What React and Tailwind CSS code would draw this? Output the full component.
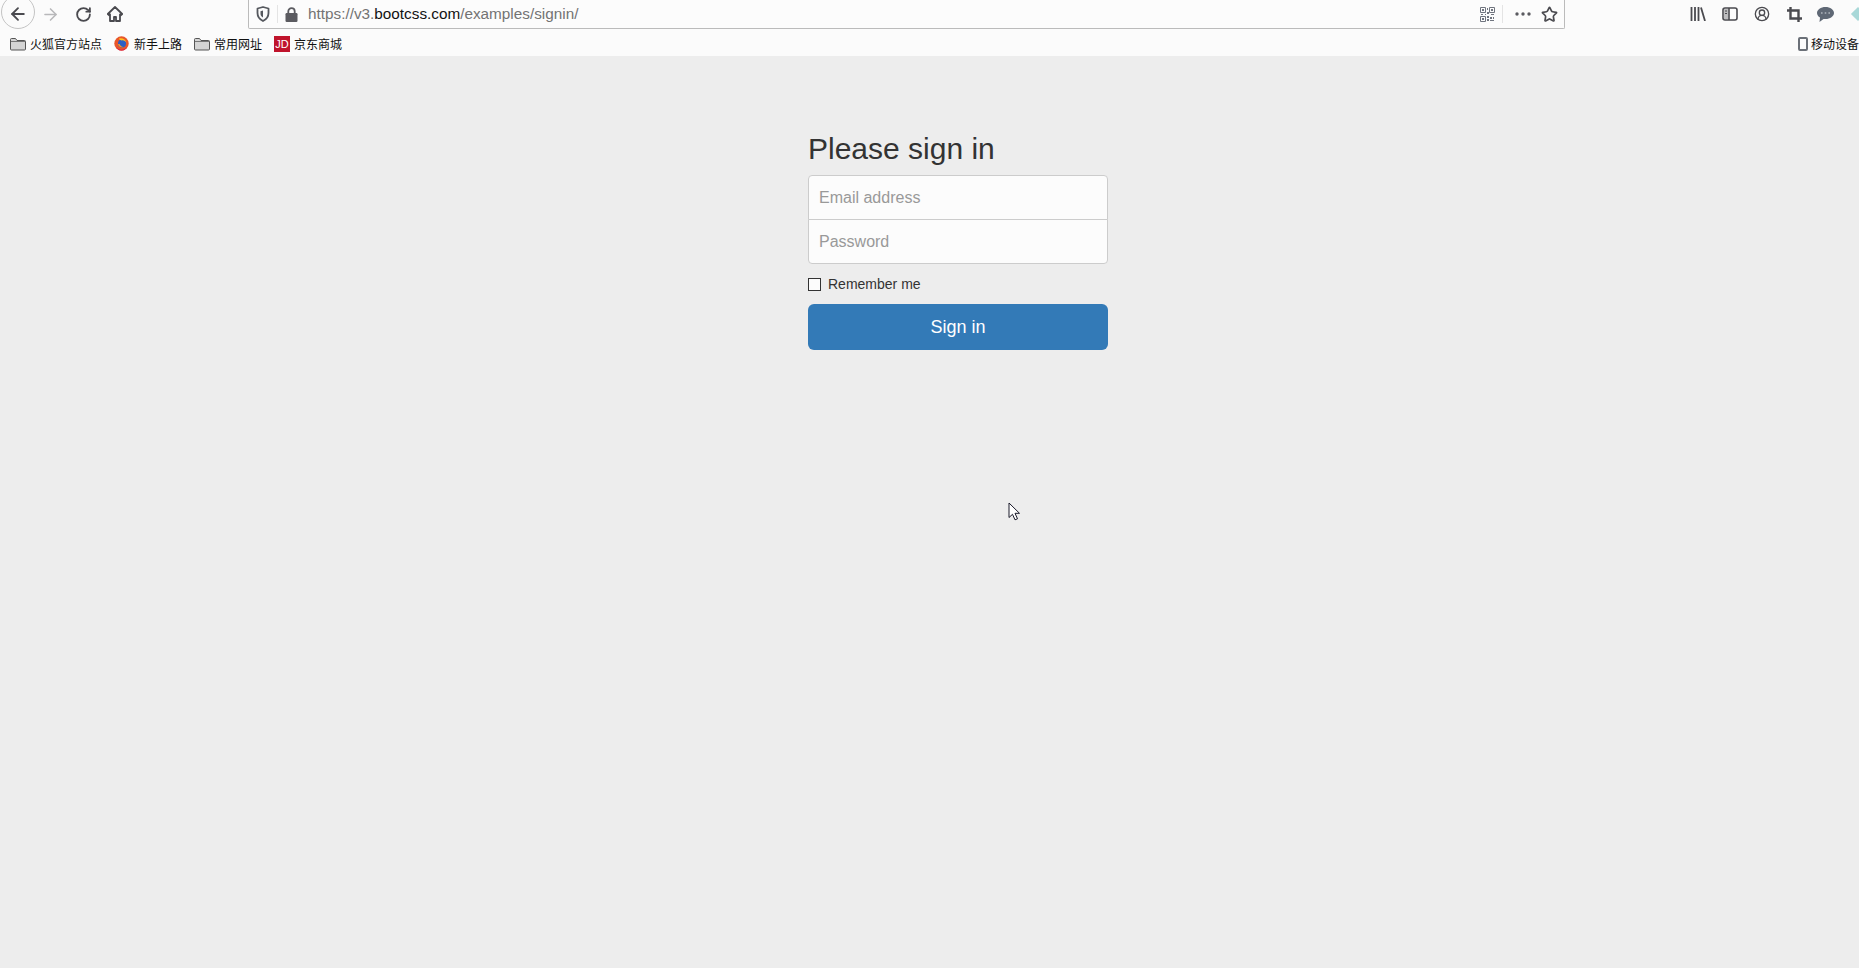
import React from "react";
import { RotateCw, ArrowLeft, ArrowRight, Star, CircleUserRound } from "lucide-react";

const Folder = () => (
  <svg width="16" height="14" viewBox="0 0 16 14" className="shrink-0">
    <path d="M.5 12V2.500a1 1 0 0 1 1-1h4l1.500 2h7.500a1 1 0 0 1 1 1V12a1 1 0 0 1-1 1h-13a1 1 0 0 1-1-1z" fill="#d4d4d4" stroke="#555" />
    <path d="M1 4.500h14" stroke="#777" />
  </svg>
);

const Firefox = () => (
  <svg width="15" height="15" viewBox="0 0 15 15" className="shrink-0">
    <circle cx="7.500" cy="7.500" r="7.200" fill="#e8562a" />
    <path d="M2 11a7 7 0 0 0 11 0 6 6 0 0 1-11 0z" fill="#d9224f" />
    <circle cx="8" cy="7.500" r="4" fill="#2d5fc4" />
    <path d="M5 2.500c3-1 7 .5 7.500 4.500-1-2-3-3-5-2.500C6 4 5 3.500 5 2.500z" fill="#ffc21f" />
    <path d="M4 8c.5 2.500 3 4 5.500 3-2 0-3.500-1.500-4-3z" fill="#ff9a1f" />
  </svg>
);

const BookmarkText = ({ children }) => (
  <span className="text-[12px] leading-none text-[#111] whitespace-nowrap font-['Noto_Sans_CJK_SC',sans-serif]">{children}</span>
);

const Bookmark = ({ icon, label, className }) => (
  <div className={`flex items-center ${className}`}>
    {icon}
    <BookmarkText>{label}</BookmarkText>
  </div>
);

const QrIcon = () => (
  <svg width="15" height="15" viewBox="0 0 15 15" className="shrink-0">
    <path d="M.5.500h5v5h-5zM9.500.500h5v5h-5zM.5 9.500h5v5h-5z" fill="none" stroke="#70757f" />
    <path d="M2 2h2v2H2zM11 2h2v2h-2zM2 11h2v2H2zM7 1h1v2H7zM7 5h2v2H7zM1 7h2v1H1zM5 7h1v1H5zM11 7h3v1h-3zM7 9h2v2H7zM10 10h2v2h-2zM13 10h1v2h-1zM7 12h2v2H7zM10 13h4v1h-4z" fill="#70757f" />
  </svg>
);

const ShieldIcon = () => (
  <svg width="14" height="16" viewBox="0 0 14 16" className="shrink-0">
    <path d="M7 1 1.500 2.500V7c0 4 2.500 6.500 5.500 8 3-1.500 5.500-4 5.500-8V2.500z" fill="none" stroke="#55585e" strokeWidth="1.800" strokeLinejoin="round" />
    <path d="M7 4.500 4.500 5.200V8c0 1.500 1 2.700 2.500 3.500z" fill="#55585e" />
  </svg>
);

const LockIcon = () => (
  <svg width="13" height="15" viewBox="0 0 13 15" className="shrink-0">
    <path d="M3.300 7V4.300a3.200 3.200 0 0 1 6.400 0V7" fill="none" stroke="#5b5b60" strokeWidth="1.800" />
    <rect x="0.500" y="6" width="12" height="9" rx="1.200" fill="#5b5b60" />
  </svg>
);

const LibraryIcon = () => (
  <svg width="16" height="14" viewBox="0 0 16 14" className="shrink-0">
    <path d="M1.500 0v14M5 0v14M8.500 0v14M11 .500 15 14" stroke="#4a4a4f" strokeWidth="1.800" fill="none" />
  </svg>
);

const SidebarIcon = () => (
  <svg width="16" height="14" viewBox="0 0 16 14" className="shrink-0">
    <rect x="1" y="1" width="14" height="12" rx="2" fill="none" stroke="#4a4a4f" strokeWidth="1.600" />
    <path d="M2 2h4.500v10H2z" fill="#4a4a4f" opacity="0.350" />
    <path d="M7 1v12" stroke="#4a4a4f" strokeWidth="1.600" />
    <path d="M3 4h2M3 6.500h2" stroke="#4a4a4f" strokeWidth="1" />
  </svg>
);

const CropIcon = () => (
  <svg width="15" height="15" viewBox="0 0 15 15" className="shrink-0">
    <path d="M3.500 0v11.500H15M0 3.500h11.500V15" fill="none" stroke="#4a4a4f" strokeWidth="2.400" />
  </svg>
);

const ChatIcon = () => (
  <svg width="17" height="15" viewBox="0 0 17 15" className="shrink-0">
    <path d="M8.500 0C3.800 0 0 2.700 0 6c0 1.900 1.200 3.500 3 4.600L2.500 15l4-3.100c.6.100 1.300.1 2 .1 4.700 0 8.500-2.700 8.500-6s-3.800-6-8.500-6z" fill="#5f6875" />
    <path d="M4 6h1.600M7.700 6h1.600M11.400 6H13" stroke="#aeb4bc" strokeWidth="1.300" />
  </svg>
);

const Toolbar = () => (
  <div className="h-[56px] bg-[#fbfbfb] flex flex-col shrink-0 overflow-hidden">
    <div className="h-[29px] flex items-start relative">
      <div className="w-[248px] h-[28px] shrink-0 flex items-center pl-[8px] text-[#4a4a4f]">
        <div className="absolute left-[1px] top-[-5px] w-[34px] h-[34px] rounded-full border border-[#c4c4c4]"></div>
        <ArrowLeft size={20} strokeWidth={2.200} />
        <ArrowRight size={19} strokeWidth={2} className="ml-[13px] text-[#b8b8ba]" />
        <RotateCw size={17} strokeWidth={2.600} className="ml-[15px]" />
        <svg width="16" height="16" viewBox="0 0 16 16" className="ml-[15px]">
          <path d="M8 1 .8 8l1.200 1.200L3 8.300V15h4v-4h2v4h4V8.300l1 .9L15.200 8z" fill="none" stroke="#4a4a4f" strokeWidth="1.800" strokeLinejoin="round" />
        </svg>
      </div>
      <div className="w-[1317px] h-[29px] shrink-0 bg-[#fcfcfc] border-l border-r border-b border-[#bbbbbb] rounded-bl-[2px] rounded-br-[2px] flex items-center pl-[7px] pr-[6px]">
        <ShieldIcon />
        <div className="w-px h-[18px] bg-[#e4e4e4] ml-[7px] mr-[7px]"></div>
        <LockIcon />
        <div className="ml-[10px] text-[15.300px] leading-none font-['Liberation_Sans',sans-serif] text-[#737373] whitespace-nowrap">
          https://v3.<span className="text-[#111]">bootcss.com</span>/examples/signin/
        </div>
        <div className="flex-1"></div>
        <QrIcon />
        <div className="w-px h-[18px] bg-[#e4e4e4] ml-[7px] mr-[12px]"></div>
        <svg width="16" height="4" viewBox="0 0 16 4" className="shrink-0">
          <circle cx="2" cy="2" r="1.700" fill="#5b5b60" />
          <circle cx="8" cy="2" r="1.700" fill="#5b5b60" />
          <circle cx="14" cy="2" r="1.700" fill="#5b5b60" />
        </svg>
        <Star size={17} strokeWidth={2.400} className="text-[#4a4a4f] ml-[10px]" />
      </div>
      <div className="flex-1 h-[28px] flex items-center pl-[125px] text-[#4a4a4f] overflow-hidden">
        <LibraryIcon />
        <div className="ml-[16px]"><SidebarIcon /></div>
        <CircleUserRound size={16} strokeWidth={2} className="ml-[16px] shrink-0" />
        <div className="ml-[17px]"><CropIcon /></div>
        <div className="ml-[15px]"><ChatIcon /></div>
        <div className="ml-[19px] w-[10px] h-[10px] bg-[#a8d8d8] rotate-45 shrink-0"></div>
      </div>
    </div>
    <div className="flex-1 flex items-center pl-[10px] pt-[2px]">
      <Bookmark icon={<Folder />} label="火狐官方站点" className="w-[104px] gap-[4px]" />
      <Bookmark icon={<Firefox />} label="新手上路" className="w-[80px] gap-[5px]" />
      <Bookmark icon={<Folder />} label="常用网址" className="w-[80px] gap-[4px]" />
      <Bookmark
        icon={
          <div className="w-[16px] h-[16px] bg-[#c0142c] text-white text-[11px] leading-[16px] text-center font-['Liberation_Sans',sans-serif] shrink-0">JD</div>
        }
        label="京东商城"
        className="gap-[4px]"
      />
      <div className="flex-1"></div>
      <div className="flex items-center gap-[3px]">
        <div className="w-[10px] h-[14px] rounded-[2px] border-[2px] border-[#6b7078] shrink-0"></div>
        <BookmarkText>移动设备</BookmarkText>
      </div>
    </div>
  </div>
);

export default function App() {
  return (
    <div className="h-[968px] bg-[#ededed] flex flex-col relative overflow-hidden font-['Liberation_Sans',sans-serif]">
      <Toolbar />
      <div className="w-[300px] mt-[76px] ml-[808px] flex flex-col">
        <h2 className="text-[30px] leading-[33px] text-[#333] font-normal mb-[10px]">Please sign in</h2>
        <input
          type="email"
          placeholder="Email address"
          className="h-[45px] px-[10px] text-[16px] bg-[#fcfcfc] border border-[#cccccc] rounded-t-[4px] outline-none placeholder:text-[#999]"
        />
        <input
          type="password"
          placeholder="Password"
          className="h-[45px] -mt-px px-[10px] text-[16px] bg-[#fcfcfc] border border-[#cccccc] rounded-b-[4px] outline-none placeholder:text-[#999]"
        />
        <label className="flex items-center mt-[13px] h-[14px] text-[14px] text-[#333]">
          <span className="w-[13px] h-[13px] bg-[#fcfcfc] border border-[#333] shrink-0"></span>
          <span className="ml-[7px]">Remember me</span>
        </label>
        <button className="mt-[13px] h-[46px] bg-[#337ab7] text-white text-[18px] rounded-[6px]">Sign in</button>
      </div>
      <svg width="13" height="20" viewBox="0 0 13 20" className="absolute left-[1008px] top-[502px]">
        <path d="M1 1v14.500l3.500-3.200 2.500 5.500 2.500-1-2.500-5.500h4.500z" fill="#fff" stroke="#1a1a2a" strokeWidth="1" />
      </svg>
    </div>
  );
}
